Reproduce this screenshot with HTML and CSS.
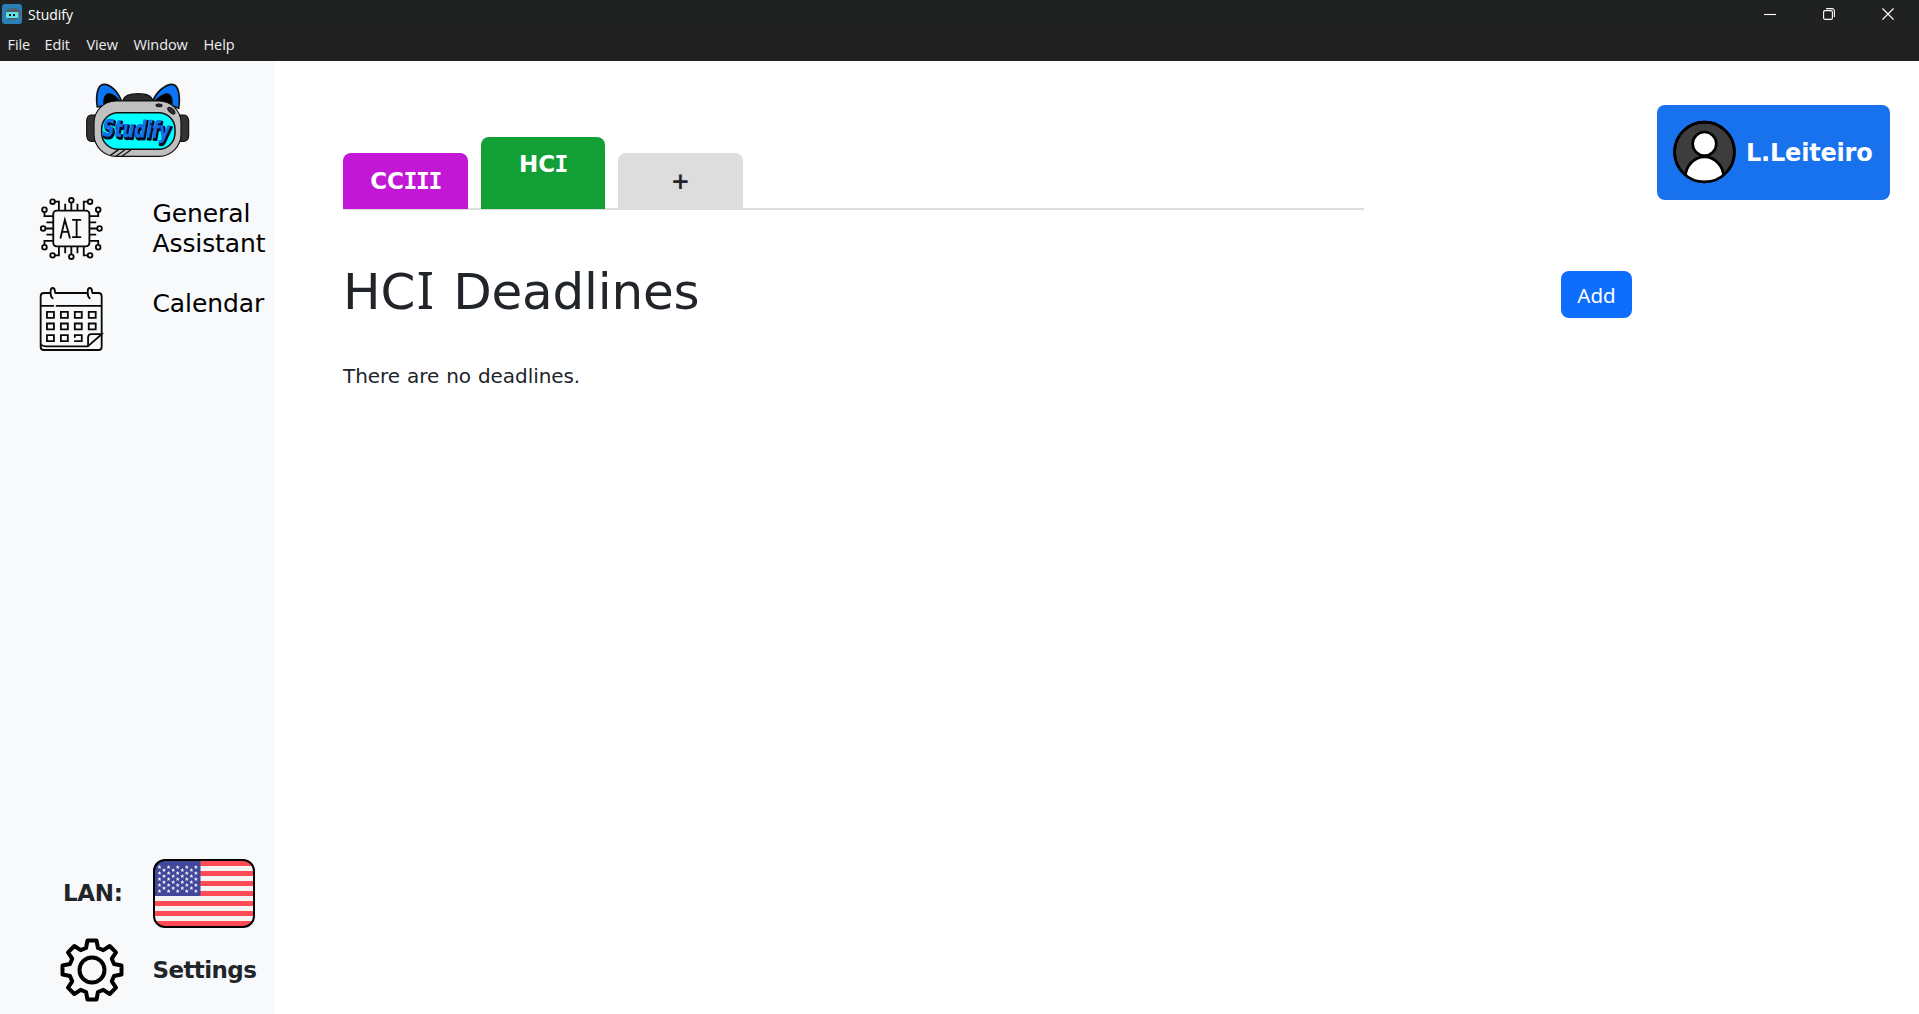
FILE: index.html
```html
<!DOCTYPE html>
<html lang="en">
<head>
<meta charset="utf-8">
<title>Studify</title>
<link rel="stylesheet" href="styles.css">
</head>
<body>
<header class="window-bar">
  <div class="title-row">
    <svg class="app-icon" viewBox="0 0 20 20"><rect width="20" height="20" rx="3" fill="#2980b9"/><ellipse cx="11" cy="10" rx="8" ry="6" fill="#555b60"/><rect x="4" y="8" width="12.500" height="6" rx="1" fill="#5ce1e6"/><path d="M7 10h2v2H7zm4 0h2v2h-2z" fill="#111"/></svg>
    <span class="app-name">Studify</span>
    <div class="window-controls">
      <svg viewBox="0 0 12 12"><path d="M0 6.500h12"/></svg>
      <svg viewBox="0 0 12 12"><rect x=".6" y="2.600" width="8.800" height="8.800" rx="1.500"/><path d="M3 .6h6a2.400 2.400 0 0 1 2.400 2.400v6"/></svg>
      <svg viewBox="0 0 12 12"><path d="M.5.5l11 11M11.500.5l-11 11"/></svg>
    </div>
  </div>
  <nav class="menu-row"><span class="file">File</span><span class="edit">Edit</span><span class="view">View</span><span class="window">Window</span><span>Help</span></nav>
</header>
<div class="app">
  <aside class="sidebar">
    <svg class="logo" viewBox="45 36 318 228">
      <g stroke="#111" stroke-width="3.500" stroke-linejoin="round">
        <path d="M158 92Q164 71 205 71Q244 71 248 92Z" fill="#2b2b2b"/>
        <path d="M75 135H62Q50 137 50 155V194Q50 211 62 214H75ZM330 135h13Q356 137 356 155V194Q356 211 343 214H330Z" fill="#333"/>
        <path d="M82 111C76 73 84 43 102 43C122 43 146 66 154 94L120 104Z" fill="#0b75f5" stroke-width="5"/>
        <path d="M326 115C332 73 324 43 306 43C286 43 259 66 249 92L292 101Z" fill="#0b75f5" stroke-width="5"/>
        <path d="M102 104C99 84 106 72 117 71C130 72 142 84 151 96ZM306 104C309 84 302 72 291 71C278 72 264 84 254 94Z" fill="#000"/>
        <rect x="72" y="93" width="261" height="166" rx="66" fill="#c0c0c0"/>
        <rect x="95" y="128" width="220" height="110" rx="49" fill="#00ffff" stroke-width="4.500"/>
        <path d="M121 256L146 239M138 259L165 239M156 259L183 239" fill="none" stroke-width="4"/>
        <ellipse cx="267" cy="106" rx="9" ry="4" fill="#333" transform="rotate(5 267 106)"/>
        <ellipse cx="304" cy="122" rx="13" ry="6" fill="#333" transform="rotate(43 304 122)"/>
      </g>
      <g class="wordmark" transform="translate(97 198) rotate(2)">
        <text x="4" y="5" textLength="202" lengthAdjust="spacingAndGlyphs" fill="#080b1c" stroke="#080b1c" stroke-width="8">Studify</text>
        <text x="0" y="0" textLength="202" lengthAdjust="spacingAndGlyphs" fill="#156fea" stroke="#156fea" stroke-width="1">Studify</text>
      </g>
    </svg>
    <nav class="side-links">
      <a class="side-link assistant">
        <svg class="side-icon" viewBox="60 50 190 190" fill="none" stroke="#080808" stroke-width="5.500">
          <rect x="100" y="91" width="109" height="108" rx="10"/>
          <g id="pins"><circle cx="98" cy="64" r="7"/><circle cx="154.500" cy="60" r="7"/><circle cx="211" cy="64" r="7"/><path d="M105 64h12v27M136 70v21M154.500 67v24M173 70v21M204 64h-12v27"/></g>
          <use href="#pins" transform="rotate(90 154.500 145)"/><use href="#pins" transform="rotate(180 154.500 145)"/><use href="#pins" transform="rotate(270 154.500 145)"/>
          <path d="M122 173L135 119L150 173M126 155h20M159 119h23M170.500 119v52M159 171h23" stroke-linecap="round"/>
        </svg>
        <span class="side-label">General<br>Assistant</span>
      </a>
      <a class="side-link">
        <svg class="side-icon" viewBox="60 319 190 190" fill="none" stroke="#080808" stroke-width="5.500" stroke-linecap="round">
          <path d="M88 337H72Q62 337 62 347V500Q62 509 72 509H237Q246 509 246 500V347Q246 337 236 337H218M106 337h96M62 376h38M110 376H246M64 494Q70 498 79 498H204L246 461H215Q205 461 205 471V498"/>
          <path d="M98 353Q92 349 92 337V332Q92 322 98 322Q105 322 105 333M210 353Q204 349 204 337V332Q204 322 210 322Q217 322 217 333"/>
          <path d="M81 394h21v18H81zM123 394h21v18h-21zM165 394h21v18h-21zM207 394h21v18h-21zM81 429h21v18H81zM123 429h21v18h-21zM165 429h21v18h-21zM207 429h21v18h-21zM81 464h21v18H81zM123 464h21v18h-21zM165 470v-6h21v18h-21"/>
        </svg>
        <span class="side-label">Calendar</span>
      </a>
    </nav>
    <div class="side-footer">
      <div class="language"><span class="bold-label lan">LAN:</span>
        <svg class="flag" viewBox="0 0 102 69">
          <defs><clipPath id="flag-clip"><rect x="1" y="1" width="100" height="67" rx="11"/></clipPath><path id="star" d="M0-2 .6-.6 2-.5.9.4 1.300 1.900 0 1.100-1.300 1.900-.9.4-2-.5-.6-.6Z"/>
          <g id="row5"><use href="#star" x="6.500"/><use href="#star" x="15.600"/><use href="#star" x="24.700"/><use href="#star" x="33.800"/><use href="#star" x="42.900"/></g>
          <g id="row4"><use href="#star" x="11"/><use href="#star" x="20.200"/><use href="#star" x="29.300"/><use href="#star" x="38.400"/></g></defs>
          <g clip-path="url(#flag-clip)"><rect width="102" height="69" fill="#f5f5f5"/>
          <path d="M0 4.500h102M0 14.500h102M0 24.500h102M0 34.500h102M0 44.500h102M0 54.500h102M0 64.500h102" stroke="#ff4b55" stroke-width="5"/>
          <rect width="47.500" height="37" fill="#41479b"/>
          <g fill="#f5f5f5"><use href="#row5" y="8"/><use href="#row5" y="14"/><use href="#row5" y="20"/><use href="#row5" y="26"/><use href="#row5" y="32"/><use href="#row4" y="11"/><use href="#row4" y="17"/><use href="#row4" y="23"/><use href="#row4" y="29"/></g></g>
          <rect x="1" y="1" width="100" height="67" rx="11" fill="none" stroke="#000" stroke-width="2"/>
        </svg>
      </div>
      <div class="settings">
        <svg class="gear" viewBox="-32 -32 64 64" fill="none" stroke="#000" stroke-width="4" stroke-linejoin="round"><circle r="12.500"/><path d="M-6-22-4.500-29.500H4.500L6-22 11.300-19.800 17.700-24 24-17.700 19.800-11.300 22-6 29.500-4.500V4.500L22 6 19.800 11.300 24 17.700 17.700 24 11.300 19.800 6 22 4.500 29.500H-4.500L-6 22-11.300 19.800-17.700 24-24 17.700-19.800 11.300-22 6-29.500 4.500V-4.500L-22-6-19.800-11.300-24-17.700-17.700-24-11.300-19.800Z"/></svg>
        <span class="bold-label settings-label">Settings</span>
      </div>
    </div>
  </aside>
  <main class="content">
    <section class="course">
      <div class="tabs">
        <button class="tab purple"><span>CC<span class="cap-i">III</span></span></button>
        <button class="tab active"><span>HC<span class="cap-i">I</span></span></button>
        <button class="tab plus">+</button>
      </div>
      <div class="heading-row">
        <h1>HC<span class="cap-i">I</span> Deadlines</h1>
        <button class="add">Add</button>
      </div>
      <p class="empty">There are no deadlines.</p>
    </section>
    <button class="user">
      <svg class="avatar" viewBox="0 0 64 64" stroke="#000" stroke-width="2.700"><defs><clipPath id="avatar-clip"><circle cx="32" cy="32" r="31"/></clipPath></defs><circle cx="32" cy="32" r="30.400" fill="#3d3d3d"/><g clip-path="url(#avatar-clip)" fill="#fff"><ellipse cx="32" cy="58" rx="19.500" ry="21"/><circle cx="32" cy="23.700" r="12"/></g><circle cx="32" cy="32" r="30.400" fill="none"/></svg>
      <span class="user-name">L.Leiteiro</span>
    </button>
  </main>
</div>
</body>
</html>
```

FILE: styles.css
```css
* { box-sizing: border-box; }
body { margin: 0; height: 1014px; overflow: hidden; background: #fff; color: #212529; font-family: "DejaVu Sans", Verdana, sans-serif; }
button { border: 0; padding: 0; font: inherit; }
svg { display: block; flex: none; }
/* Capital I with slab serifs */
.cap-i { font-family: "DejaVu Sans Mono", monospace; letter-spacing: -0.06em; margin-left: -0.02em; }

.window-bar { height: 61px; background: #202020; color: #fff; font: 15px "Open Sans", sans-serif; }
.title-row { display: flex; align-items: center; height: 29px; background: #202221; padding: 0 25px 0 2px; }
.app-icon { width: 20px; height: 20px; margin: -1px 6px 0 0; }
.app-name { margin-top: -1px; font-size: 14px; letter-spacing: 0; }
.window-controls { display: flex; gap: 47px; margin: -1px 0 0 auto; }
.window-controls svg { width: 12px; height: 12px; fill: none; stroke: #fff; stroke-width: 1.1; }
.menu-row { display: flex; padding-left: 7.500px; line-height: 32px; font-size: 14.500px; letter-spacing: -0.1px; color: #eee; }
.file { width: 37px; }
.edit { width: 42px; }
.view { width: 47px; }
.window { width: 70px; }

.app { display: flex; height: 953px; }
.sidebar { display: flex; flex-direction: column; width: 275px; background: #f8f9fb; }
.logo { width: 106px; height: 76px; margin: 21px 0 0 85px; overflow: visible; }
.wordmark { font: italic 900 70px "DejaVu Sans", sans-serif; stroke-linejoin: round; }
.side-links { margin-top: 39px; }
.side-link { display: flex; gap: 49.500px; height: 90px; padding-left: 40px; color: #000; }
.side-icon { width: 63px; height: 63px; overflow: visible; }
.side-label { padding-top: 1.500px; font-size: 25px; line-height: 30px; letter-spacing: -0.1px; }
.side-footer { margin-top: auto; height: 155px; }
.language { display: flex; align-items: center; height: 69px; }
.bold-label { font-size: 23px; font-weight: bold; letter-spacing: -0.3px; }
.lan { width: 90px; margin: -2px 0 0 63px; }
.flag { width: 102px; height: 69px; }
.settings { display: flex; align-items: center; height: 64px; margin-top: 10px; padding-left: 60px; gap: 28.500px; }
.settings-label { letter-spacing: -0.6px; }
.gear { width: 64px; height: 64px; }

.content { display: flex; flex: 1; align-items: flex-start; padding: 44px 29px 0 68px; }
.course { width: 1289px; padding-top: 31px; }
.tabs { display: flex; align-items: flex-end; gap: 13px; width: 1021px; height: 74px; background: linear-gradient(#ddd, #ddd) 0 100% / 100% 2px no-repeat; }
.tab { width: 125px; height: 56px; margin-bottom: 1px; border-radius: 8px 8px 0 0; font-size: 23px; font-weight: bold; color: #fff; }
.purple { background: #c218d5; }
.active { width: 124px; height: 72px; padding-bottom: 18px; background: #129f35; }
.plus { background: #ddd; color: #212529; }
.heading-row { display: flex; justify-content: space-between; align-items: flex-start; margin-top: 52px; }
h1 { margin: 0; font-size: 50px; line-height: 60px; font-weight: normal; letter-spacing: -0.2px; word-spacing: 0.034em; }
h1 .cap-i { display: inline-block; margin: 0; padding: 0 0.034em; font-family: "Noto Sans", sans-serif; font-size: 51px; line-height: 50px; letter-spacing: 0; }
.add { width: 71px; height: 47px; margin-top: 9px; border-radius: 8px; background: #0d6efd; color: #fff; font: 20.500px "Noto Sans", sans-serif; }
.empty { margin: 39px 0 0; font-size: 20px; line-height: 30px; letter-spacing: -0.06px; word-spacing: 0.7px; }
.user { display: flex; align-items: center; gap: 10px; width: 233px; height: 95px; margin-left: auto; padding-left: 16px; border-radius: 8px; background: #1972ed; color: #fff; }
.avatar { width: 63px; height: 64px; margin-top: -1px; }
.user-name { font-size: 24px; font-weight: bold; letter-spacing: -0.2px; }
```
